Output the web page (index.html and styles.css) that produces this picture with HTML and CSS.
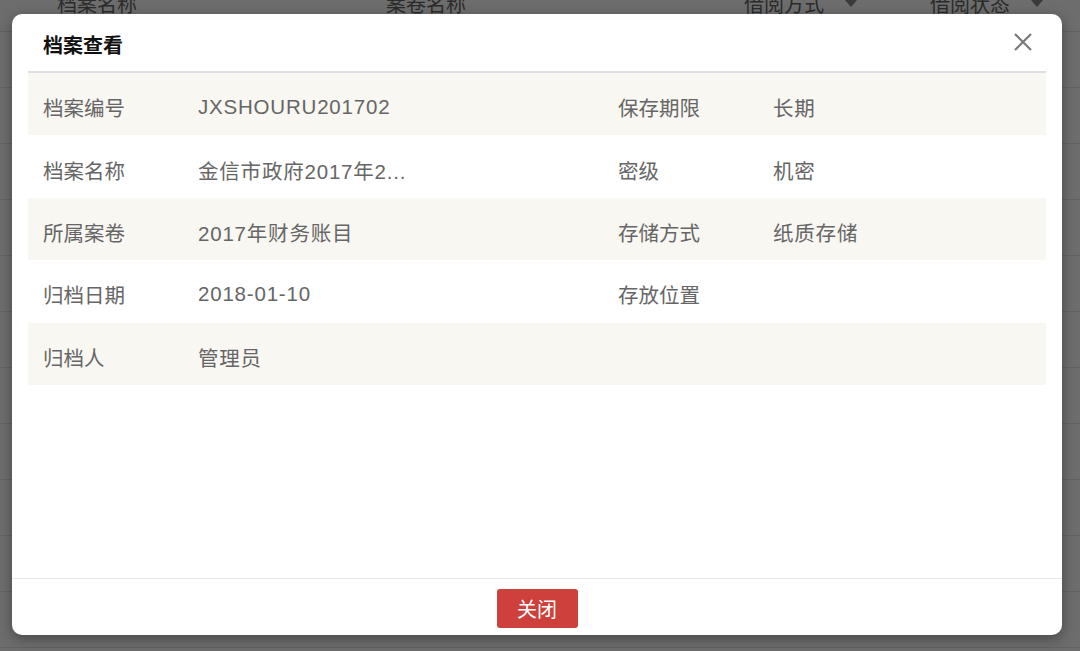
FILE: index.html
```html
<!DOCTYPE html>
<html lang="zh-CN">
<head>
<meta charset="utf-8">
<title>档案查看</title>
<link rel="stylesheet" href="styles.css">
</head>
<body>
<div class="page">
  <div class="bg-table">
    <div class="bg-head">
      <div class="bg-cell c1">档案名称</div>
      <div class="bg-cell c2">案卷名称</div>
      <div class="bg-cell c3">借阅方式<span class="caret"></span></div>
      <div class="bg-cell c4">借阅状态<span class="caret"></span></div>
    </div>
    <div class="bg-row"></div>
    <div class="bg-row"></div>
    <div class="bg-row"></div>
    <div class="bg-row"></div>
    <div class="bg-row"></div>
    <div class="bg-row"></div>
    <div class="bg-row"></div>
    <div class="bg-row"></div>
    <div class="bg-row"></div>
    <div class="bg-row"></div>
    <div class="bg-row"></div>
  </div>

  <div class="modal">
    <div class="modal-header">
      <h2 class="modal-title">档案查看</h2>
      <button class="modal-close" aria-label="关闭">
        <svg width="18" height="18" viewBox="0 0 18 18"><path d="M1 1L17 17M17 1L1 17" stroke="#7a7a7a" stroke-width="2.2" fill="none"/></svg>
      </button>
    </div>
    <div class="modal-body">
      <div class="info">
        <div class="info-row odd">
          <div class="k">档案编号</div><div class="v">JXSHOURU201702</div>
          <div class="k">保存期限</div><div class="v">长期</div>
        </div>
        <div class="info-row">
          <div class="k">档案名称</div><div class="v">金信市政府2017年2...</div>
          <div class="k">密级</div><div class="v">机密</div>
        </div>
        <div class="info-row odd">
          <div class="k">所属案卷</div><div class="v">2017年财务账目</div>
          <div class="k">存储方式</div><div class="v">纸质存储</div>
        </div>
        <div class="info-row">
          <div class="k">归档日期</div><div class="v">2018-01-10</div>
          <div class="k">存放位置</div><div class="v"></div>
        </div>
        <div class="info-row odd">
          <div class="k">归档人</div><div class="v">管理员</div>
          <div class="k"></div><div class="v"></div>
        </div>
      </div>
    </div>
    <div class="modal-footer">
      <button class="btn-close">关闭</button>
    </div>
  </div>
</div>
</body>
</html>
```

FILE: styles.css
```css
* { box-sizing: border-box; }
html, body {
  margin: 0;
  padding: 0;
  width: 1080px;
  height: 651px;
  overflow: hidden;
}
body {
  background: #6d6d6d;
  font-family: "Liberation Sans", "Noto Sans CJK SC", sans-serif;
}
.page {
  position: relative;
  width: 1080px;
  height: 651px;
  overflow: hidden;
}

/* dimmed table behind the dialog */
.bg-table {
  margin-top: -24px;
}
.bg-head {
  display: flex;
  height: 56px;
  align-items: center;
  border-bottom: 1px solid #626262;
  color: #2b2b2b;
  font-size: 20px;
}
.bg-cell {
  display: flex;
  align-items: center;
}
.c1 { width: 386px; padding-left: 57px; }
.c2 { width: 358px; }
.c3 { width: 186px; }
.c4 { flex: 1; }
.caret {
  width: 0;
  height: 0;
  border-left: 6px solid transparent;
  border-right: 6px solid transparent;
  border-top: 7px solid #3a3a3a;
  margin-left: 21px;
}
.bg-row {
  height: 56px;
  border-bottom: 1px solid #626262;
}

/* dialog */
.modal {
  position: absolute;
  left: 12px;
  top: 14px;
  width: 1050px;
  height: 621px;
  background: #fff;
  border-radius: 10px;
  box-shadow: 0 4px 14px rgba(0,0,0,0.35);
  display: flex;
  flex-direction: column;
}
.modal-header {
  display: flex;
  align-items: center;
  justify-content: space-between;
  height: 57px;
  padding: 0 30px 0 31px;
}
.modal-title {
  margin: 0;
  font-size: 20px;
  font-weight: bold;
  color: #111;
  padding-top: 4px;
}
.modal-close {
  border: 0;
  background: none;
  padding: 0;
  width: 18px;
  height: 18px;
  margin-top: -2px;
  display: block;
}
.modal-close svg { display: block; }

.modal-body {
  flex: 1;
  padding: 0 16px;
}
.info {
  border-top: 2px solid #dddfe2;
}
.info-row {
  display: grid;
  grid-template-columns: 170px 405px 170px 1fr;
  align-items: center;
  height: 62.4px;
  padding-top: 6px;
  color: #666;
  font-size: 20.5px;
}
.info-row.odd { background: #f9f7f2; }
.k { padding-left: 15px; }
.v { letter-spacing: 0.8px; }

.modal-footer {
  border-top: 1px solid #e6e6e6;
  height: 57px;
  display: flex;
  justify-content: center;
  padding-top: 10px;
}
.btn-close {
  width: 81px;
  height: 39px;
  border: 0;
  border-radius: 3px;
  background: #cd403b;
  color: #fff;
  font-family: "Liberation Sans", "Noto Sans CJK SC", sans-serif;
  font-size: 20px;
  padding: 0;
}
```
